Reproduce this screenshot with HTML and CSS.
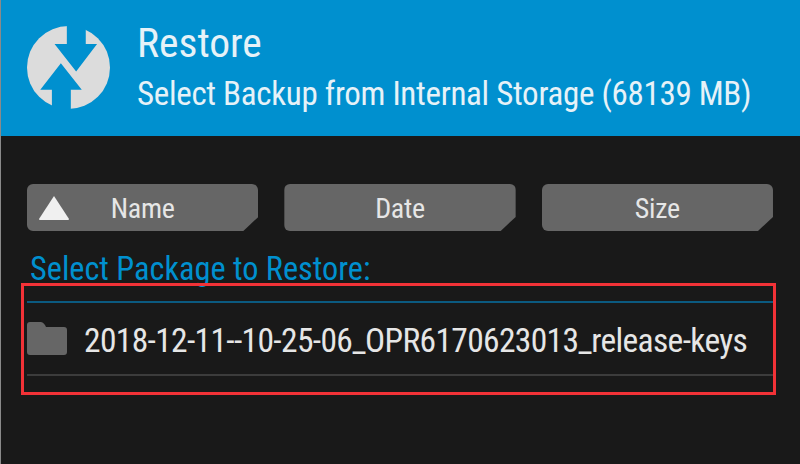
FILE: index.html
```html
<!DOCTYPE html>
<html lang="en">

<head>
  <meta charset="UTF-8">
  <title>Restore</title>
  <link rel="stylesheet" href="styles.css">
</head>

<body>
  <div class="screen">
    <!-- Header -->
    <div class="header">
      <svg class="logo" viewBox="0 0 250 250">
        <circle cx="125" cy="125" r="125" fill="#dcdcdc" />
        <polygon fill="#0090cf" points="120,-5 177,-5 177,54 211,54 148,137 83,54 120,54" />
        <polygon fill="#0090cf" points="102,112 165,192 132,192 132,255 75,255 75,192 40,192" />
      </svg>
      <div class="header-text">
        <div class="title">Restore</div>
        <div class="subtitle">Select Backup from Internal Storage (68139 MB)</div>
      </div>
    </div>

    <!-- Sort buttons -->
    <div class="sort-buttons">
      <div class="sort-btn">
        <svg class="sort-arrow" viewBox="0 0 32 26">
          <path d="M16 1 L31 24 Q31 25 30 25 L2 25 Q1 25 1 24 Z" fill="#f0f0f0" />
        </svg>
        <span>Name</span>
      </div>
      <div class="sort-btn"><span>Date</span></div>
      <div class="sort-btn"><span>Size</span></div>
    </div>

    <div class="list-label">Select Package to Restore:</div>

    <div class="file-list">
      <div class="file-row">
        <svg class="folder" viewBox="0 0 40 33">
          <path d="M3 0 H14 Q16 0 18 3 L19 5 H37 Q40 5 40 8 V30 Q40 33 37 33 H3 Q0 33 0 30 V3 Q0 0 3 0 Z" fill="#666" />
        </svg>
        <span class="file-name">2018-12-11--10-25-06_OPR6170623013_release-keys</span>
      </div>
    </div>

    <!-- Annotation -->
    <div class="highlight"></div>
  </div>
</body>

</html>
```

FILE: styles.css
```css
body {
  margin: 0;
  background: #191919;
  font-family: Roboto, "Liberation Sans", sans-serif;
  font-stretch: 75%;
}

.screen {
  position: relative;
  width: 800px;
  height: 464px;
  overflow: hidden;
  background: #191919;
  border-left: 1px solid #8a8a8a;
  box-sizing: border-box;
}

.header {
  display: flex;
  align-items: flex-start;
  height: 136px;
  padding: 26px 0 0 26px;
  box-sizing: border-box;
  background: #0090cf;
}

.logo {
  width: 83px;
  height: 83px;
  flex: none;
}

.header-text {
  margin-left: 27px;
  margin-top: -2px;
  color: #e6f2f8;
}

.title {
  font-size: 41.5px;
  line-height: 38px;
}

.subtitle {
  margin-top: 15px;
  font-size: 33px;
  line-height: 34px;
  letter-spacing: -0.3px;
  white-space: nowrap;
}

.sort-buttons {
  display: flex;
  gap: 26px;
  margin: 48px 0 0 26px;
  width: 746px;
}

.sort-btn {
  position: relative;
  flex: 1;
  display: flex;
  justify-content: center;
  align-items: center;
  height: 47px;
  padding-top: 2px;
  box-sizing: border-box;
  background: #666;
  border-radius: 6px;
  clip-path: polygon(0 0, 100% 0, 100% 70%, calc(100% - 15px) 100%, 0 100%);
  color: #e6e6e6;
  font-size: 28px;
  letter-spacing: -0.3px;
}

.sort-arrow {
  position: absolute;
  left: 11px;
  top: 11px;
  width: 32px;
  height: 26px;
}

.list-label {
  margin: 21px 0 0 29px;
  font-size: 32.3px;
  line-height: 34px;
  color: #0090cf;
}

.file-list {
  margin: 15px 0 0 26px;
  width: 746px;
  border-top: 2px solid #0b5a80;
}

.file-row {
  display: flex;
  align-items: center;
  height: 71px;
  border-bottom: 2px solid #3c3c3c;
}

.folder {
  width: 40px;
  height: 33px;
  flex: none;
}

.file-name {
  margin-left: 17px;
  padding-top: 3px;
  color: #e6e6e6;
  font-size: 33.5px;
  letter-spacing: -0.66px;
  white-space: nowrap;
}

.highlight {
  position: absolute;
  left: 20px;
  top: 283px;
  width: 755px;
  height: 112px;
  box-sizing: border-box;
  border: 3px solid #f23237;
}
```
